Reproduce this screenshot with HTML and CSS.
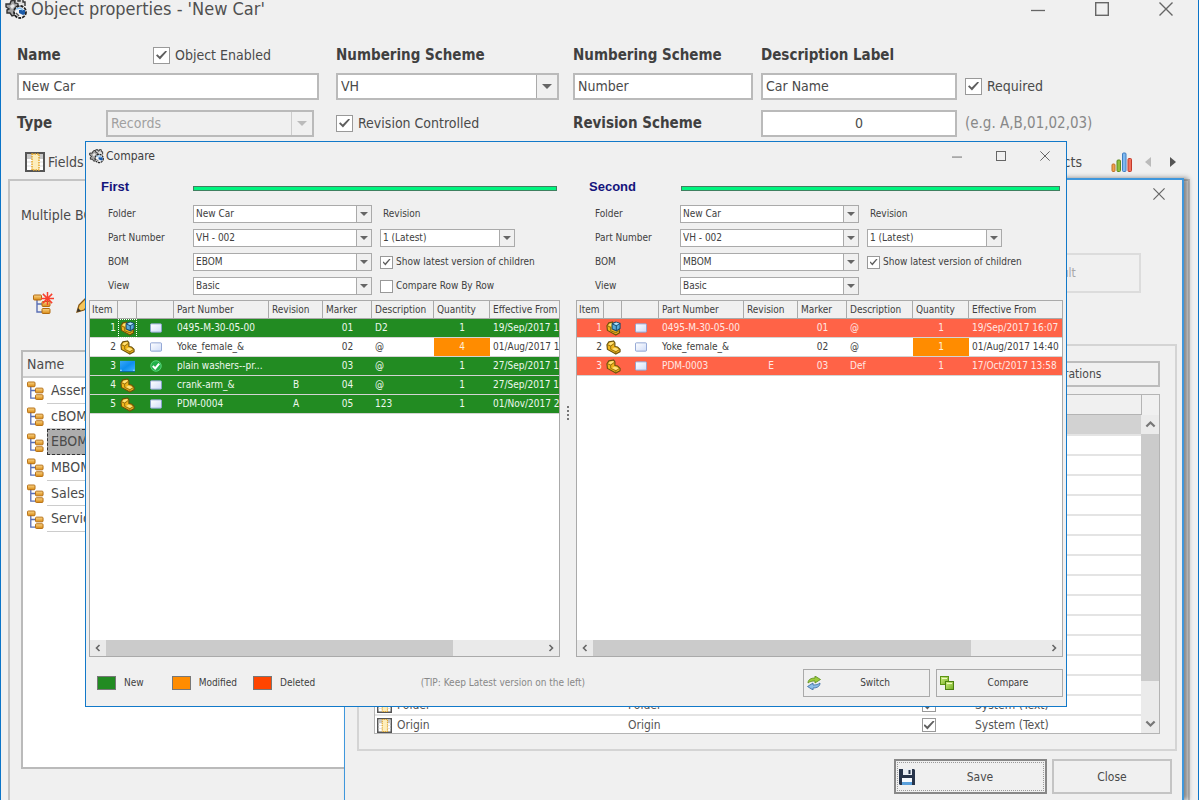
FILE: index.html
```html
<!DOCTYPE html>
<html lang="en">
<head>
<meta charset="utf-8">
<title>Object properties - 'New Car'</title>
<link rel="stylesheet" href="styles.css">
</head>
<body>
<svg class="defs" aria-hidden="true">
  <defs>
    <linearGradient id="g-gold" x1="0" y1="0" x2="0" y2="1"><stop offset="0" stop-color="#fbd68a"/><stop offset="1" stop-color="#d98a12"/></linearGradient>
    <linearGradient id="g-card" x1="0" y1="0" x2="1" y2="1"><stop offset="0" stop-color="#ffffff"/><stop offset="1" stop-color="#cfdcf8"/></linearGradient>
    <linearGradient id="g-screen" x1="0" y1="0" x2="1" y2="1"><stop offset="0" stop-color="#3aa8f8"/><stop offset=".5" stop-color="#0e8eee"/><stop offset="1" stop-color="#3db2ff"/></linearGradient>
    <linearGradient id="g-box" x1="0" y1="0" x2="1" y2="1"><stop offset="0" stop-color="#d5ee8a"/><stop offset="1" stop-color="#6fae1c"/></linearGradient>
  </defs>
  <symbol id="i-gears" viewBox="0 0 22 22">
    <path d="M6 3l3-1 1 3 3 0 0 3-2 1 1 3-2 2 0 3-3 1-2-3-3 0 0-3 2-1-3-2 0-3 4 0z" fill="#a4a4a4" stroke="#333" stroke-width="1.400"/>
    <path d="M10 4V1h3v2h2V1h3v3h2v4" fill="#ddd" stroke="#333" stroke-width="1.400"/>
    <circle cx="15" cy="14" r="6" fill="#f4f4f4" stroke="#222" stroke-width="1.800" stroke-dasharray="3 1"/>
    <path d="M14 12h6v4l-2 1-4-2z" fill="#1b5aa8"/><path d="M11 11l4-1 3 2" stroke="#8cc4f4" stroke-width="1.600" fill="none"/>
    <path d="M11 15l3 3" stroke="#555" stroke-width="1.400"/>
    <path d="M5 8l3-2 2 2-3 3z" fill="#e8e8e8"/>
  </symbol>
  <symbol id="i-fields" viewBox="0 0 20 20">
    <rect x="1" y="1" width="18" height="18" fill="#fff" stroke="#555" stroke-width="2"/>
    <path d="M2 2h16v5H2z" fill="#c9c9c9"/><path d="M2 10h16M2 14h16" stroke="#ddd"/>
    <rect x="7" y="2" width="7" height="16" fill="#fdeebc" stroke="#e3a72b" stroke-width="1.500" stroke-dasharray="1.500 1"/>
  </symbol>
  <symbol id="i-tree" viewBox="0 0 18 20">
    <path d="M4 5v13h6M4 10h6" fill="none" stroke="#5a6fb4" stroke-width="1.400"/>
    <rect x=".5" y="1" width="8" height="5" rx="1" fill="url(#g-gold)" stroke="#b36b10"/>
    <rect x="9" y="7.500" width="8" height="5" rx="1" fill="url(#g-gold)" stroke="#b36b10"/>
    <rect x="9" y="14.500" width="8" height="5" rx="1" fill="url(#g-gold)" stroke="#b36b10"/>
  </symbol>
  <symbol id="i-star" viewBox="0 0 14 14">
    <path d="M7 0v14M0 7h14M2 2l10 10M12 2L2 12" stroke="#f8402e" stroke-width="1.600"/>
  </symbol>
  <symbol id="i-pencil" viewBox="0 0 18 18">
    <path d="M1 17l2-7 9-9 5 5-9 9z" fill="#f6c558" stroke="#8c5a12" stroke-width="1.300"/><path d="M1 17l1-4 3 3z" fill="#333"/>
  </symbol>
  <symbol id="i-part" viewBox="0 0 16 16">
    <path d="M1 5l2-3 5-1 1.500 2v4l3 .5 2.500 2.500v2.500L10.500 15 1.500 10z" fill="#f0b51c" stroke="#69500c" stroke-width="1.200" stroke-linejoin="round"/>
    <path d="M1.500 5l3.500 1.500 4-3M5 6.500V10l5.500 2.500 4-2.500M10.500 12.500V15" fill="none" stroke="#86660f" stroke-width=".9"/>
    <path d="M2.500 4.500L4 2.800l3.500-.8 1 1-3.500 2.500zM6.500 9.500L9.500 8l4 1.800-3 1.800z" fill="#ffe27a"/>
  </symbol>
  <symbol id="i-asm" viewBox="0 0 16 16">
    <path d="M1 5l2-3 4-1 2 7 5-.5.500 5L10.500 15 1.500 10z" fill="#f0b51c" stroke="#69500c" stroke-width="1.200" stroke-linejoin="round"/>
    <path d="M1.500 5l3.500 2v3.500l5.500 2 4-2.500" fill="none" stroke="#86660f"/><path d="M2.500 4.500L4 2.800l3-.6L5.500 5.500z" fill="#ffe27a"/>
    <path d="M6.500 3l4-2 4.500 1.500v5.500L11 10.500 6.500 8.500z" fill="#58a9d8" stroke="#174a6c" stroke-width="1.100"/>
    <path d="M6.500 3L11 5l4-2.500M11 5v5.500" fill="none" stroke="#174a6c"/><path d="M8 3l3-1.300 3 1L11 4.300z" fill="#b5e2f8"/>
  </symbol>
  <symbol id="i-screen" viewBox="0 0 16 12">
    <rect width="16" height="11" fill="url(#g-screen)"/><path d="M0 11.500h16" stroke="#0b62b5"/><path d="M0 10h2M14 10h1.500" stroke="#bfe4ff"/>
  </symbol>
  <symbol id="i-card" viewBox="0 0 13 10">
    <rect x=".5" y=".5" width="12" height="9" rx="1" fill="url(#g-card)" stroke="#8aa0d0"/>
  </symbol>
  <symbol id="i-ok" viewBox="0 0 12 12">
    <circle cx="6" cy="6" r="5.700" fill="#22b04a"/><circle cx="6" cy="6" r="5.200" fill="none" stroke="#6fdc88" stroke-width=".7"/><path d="M2.800 6l2.400 2.500L9.200 3.700" fill="none" stroke="#fff" stroke-width="2"/>
  </symbol>
  <symbol id="i-chart" viewBox="0 0 22 20">
    <rect x="1" y="12" width="3" height="7.500" rx="1" fill="#f0a24a" stroke="#c0702a"/>
    <rect x="6" y="8" width="3.500" height="11.500" rx="1" fill="#8fbf3a" stroke="#5c8a1e"/>
    <rect x="11.500" y="1" width="3.500" height="18.500" rx="1" fill="#7fb8ee" stroke="#3f7fc4"/>
    <rect x="17" y="6.500" width="3.500" height="13" rx="1" fill="#f2705c" stroke="#c23a2a"/>
  </symbol>
  <symbol id="i-save" viewBox="0 0 16 16">
    <path d="M0 0h15l1 1v15H1l-1-1z" fill="#27344a"/><rect x="4" y="0" width="9" height="6" fill="#e9eef4"/><rect x="9.500" y="1" width="2" height="4" fill="#27344a"/>
    <rect x="3" y="9" width="10" height="7" fill="#f7fbff"/><rect x="3" y="13" width="10" height="3" fill="#5aa0dc"/>
  </symbol>
  <symbol id="i-switch" viewBox="0 0 14 14">
    <path d="M1 7C1 3.500 4 2 8 2V0l5.500 3.500L8 7V5C5 5 3 5.500 1 7z" fill="#9ccb3b" stroke="#5a8c1c" stroke-width=".8"/>
    <path d="M13 7c0 3.500-3 5-7 5v2L.5 10.500 6 7v2c3 0 5-.5 7-2z" fill="#8fbfe8" stroke="#35679f" stroke-width=".8"/>
  </symbol>
  <symbol id="i-boxes" viewBox="0 0 14 14">
    <rect x=".5" y=".5" width="8" height="8" fill="url(#g-box)" stroke="#5c9414"/>
    <rect x="5.500" y="5.500" width="8" height="8" fill="url(#g-box)" stroke="#4c7f10"/>
    <path d="M2 2.500h5M7 7.500h5" stroke="#eefabf"/>
  </symbol>
  <symbol id="i-min" viewBox="0 0 14 14"><path d="M0 8.500h14" stroke="currentColor" stroke-width="1.300"/></symbol>
  <symbol id="i-max" viewBox="0 0 14 14"><rect x=".7" y=".7" width="12.600" height="12.600" fill="none" stroke="currentColor" stroke-width="1.400"/></symbol>
  <symbol id="i-close" viewBox="0 0 14 14"><path d="M.5.5l13 13M13.500.5l-13 13" stroke="currentColor" stroke-width="1.400"/></symbol>
  <symbol id="i-left" viewBox="0 0 6 10"><path d="M6 0v10L0 5z" fill="currentColor"/></symbol>
  <symbol id="i-right" viewBox="0 0 6 10"><path d="M0 0v10l6-5z" fill="currentColor"/></symbol>
  <symbol id="i-chev" viewBox="0 0 8 8"><path d="M5.500 1L2.500 4l3 3" fill="none" stroke="currentColor" stroke-width="1.600"/></symbol>
</svg>

<main class="window object-window">
  <header class="titlebar">
    <svg class="title-icon"><use href="#i-gears"/></svg>
    <h1 class="title">Object properties - 'New Car'</h1>
    <div class="win-buttons">
      <button aria-label="Minimize"><svg><use href="#i-min"/></svg></button>
      <button aria-label="Maximize"><svg><use href="#i-max"/></svg></button>
      <button aria-label="Close window"><svg><use href="#i-close"/></svg></button>
    </div>
  </header>

  <form class="object-form">
    <div class="cell"><label class="strong name-label" for="name">Name</label><label class="check"><input type="checkbox" checked> Object Enabled</label></div>
    <div class="cell"><label class="strong" for="scheme">Numbering Scheme</label></div>
    <div class="cell"><label class="strong" for="number">Numbering Scheme</label></div>
    <div class="cell"><label class="strong" for="desc">Description Label</label></div>
    <div class="cell"></div>

    <div class="cell wide-gap"><input class="box" id="name" type="text" value="New Car"></div>
    <div class="cell mid-gap"><span class="drop"><select id="scheme"><option>VH</option></select></span></div>
    <div class="cell"><input class="box" id="number" type="text" value="Number"></div>
    <div class="cell"><input class="box" id="desc" type="text" value="Car Name"></div>
    <div class="cell"><label class="check"><input type="checkbox" checked> Required</label></div>

    <div class="cell wide-gap"><label class="strong type-label" for="type">Type</label><span class="drop disabled"><select id="type" disabled><option>Records</option></select></span></div>
    <div class="cell"><label class="check"><input type="checkbox" checked> Revision Controlled</label></div>
    <div class="cell"><label class="strong" for="rev">Revision Scheme</label></div>
    <div class="cell"><input class="box center" id="rev" type="text" value="0"></div>
    <div class="cell hint">(e.g. A,B,01,02,03)</div>
  </form>

  <nav class="tabs">
    <svg class="tab-icon"><use href="#i-fields"/></svg><span>Fields</span>
    <span class="tab-last">Products</span>
    <svg class="chart-icon"><use href="#i-chart"/></svg>
    <button class="arrow dim" aria-label="Previous tab"><svg><use href="#i-left"/></svg></button>
    <button class="arrow" aria-label="Next tab"><svg><use href="#i-right"/></svg></button>
  </nav>

  <section class="tab-page">
    <p class="page-label">Multiple BOM</p>
    <div class="tools">
      <button class="tool new" aria-label="New structure"><svg class="tree"><use href="#i-tree"/></svg><svg class="star"><use href="#i-star"/></svg></button>
      <button class="tool" aria-label="Edit"><svg class="pencil"><use href="#i-pencil"/></svg></button>
    </div>
    <div class="bom-list">
      <div class="bom-head">Name</div>
      <ul class="bom-rows">
        <li><svg><use href="#i-tree"/></svg><span>Assembly</span></li>
        <li><svg><use href="#i-tree"/></svg><span>cBOM</span></li>
        <li class="picked"><svg><use href="#i-tree"/></svg><span>EBOM</span></li>
        <li><svg><use href="#i-tree"/></svg><span>MBOM</span></li>
        <li><svg><use href="#i-tree"/></svg><span>Sales</span></li>
        <li><svg><use href="#i-tree"/></svg><span>Service</span></li>
      </ul>
    </div>
  </section>
</main>

<section class="window fields-window" aria-label="Fields">
  <header class="fields-title"><button aria-label="Close fields"><svg><use href="#i-close"/></svg></button></header>
  <div class="default-row"><button class="default-button" disabled>Default</button></div>
  <div class="group">
    <button class="config-button">Configurations</button>
    <div class="field-grid">
      <div class="field-head"></div>
      <div class="field-body">
        <table class="field-table">
          <colgroup><col class="f-icon"><col class="f-name"><col class="f-label"><col class="f-check"><col></colgroup>
          <tbody>
            <tr class="picked"><td colspan="5"></td></tr>
            <tr><td colspan="5"></td></tr><tr><td colspan="5"></td></tr><tr><td colspan="5"></td></tr><tr><td colspan="5"></td></tr>
            <tr><td colspan="5"></td></tr><tr><td colspan="5"></td></tr><tr><td colspan="5"></td></tr><tr><td colspan="5"></td></tr>
            <tr><td colspan="5"></td></tr><tr><td colspan="5"></td></tr><tr><td colspan="5"></td></tr><tr><td colspan="5"></td></tr><tr><td colspan="5"></td></tr>
            <tr><td><svg><use href="#i-fields"/></svg></td><td>Folder</td><td>Folder</td><td><input type="checkbox" checked aria-label="Folder visible"></td><td>System (Text)</td></tr>
            <tr><td><svg><use href="#i-fields"/></svg></td><td>Origin</td><td>Origin</td><td><input type="checkbox" checked aria-label="Origin visible"></td><td>System (Text)</td></tr>
          </tbody>
        </table>
        <div class="vscroll"><svg class="up"><use href="#i-chev"/></svg><div class="vthumb"></div><div class="vtrack"></div><svg class="down"><use href="#i-chev"/></svg></div>
      </div>
    </div>
  </div>
  <footer class="fields-footer">
    <button class="save"><svg><use href="#i-save"/></svg><span>Save</span></button>
    <button class="close"><span>Close</span></button>
  </footer>
</section>

<section class="window compare-window" aria-label="Compare">
  <header class="compare-title">
    <svg class="title-icon"><use href="#i-gears"/></svg>
    <h2 class="title">Compare</h2>
    <div class="win-buttons">
      <button aria-label="Minimize compare"><svg><use href="#i-min"/></svg></button>
      <button aria-label="Maximize compare"><svg><use href="#i-max"/></svg></button>
      <button aria-label="Close compare"><svg><use href="#i-close"/></svg></button>
    </div>
  </header>

  <div class="panes">
    <section class="pane first">
      <div class="pane-head"><h3>First</h3><div class="bar"></div></div>
      <div class="pane-form">
        <label for="folder1">Folder</label><span class="drop"><select id="folder1"><option>New Car</option></select></span><label class="rev" for="rev1">Revision</label>
        <label for="part1">Part Number</label><span class="drop"><select id="part1"><option>VH - 002</option></select></span><span class="drop"><select id="rev1"><option>1 (Latest)</option></select></span>
        <label for="bom1">BOM</label><span class="drop"><select id="bom1"><option>EBOM</option></select></span><label class="check"><input type="checkbox" checked> Show latest version of children</label>
        <label for="view1">View</label><span class="drop"><select id="view1"><option>Basic</option></select></span><label class="check"><input type="checkbox"> Compare Row By Row</label>
      </div>
      <div class="grid-box">
        <div class="grid-view">
          <table class="parts">
            <colgroup><col class="w-item"><col class="w-kind"><col class="w-state"><col class="w-part"><col class="w-rev"><col class="w-mark"><col class="w-desc"><col class="w-qty"><col></colgroup>
            <thead><tr><th>Item</th><th></th><th></th><th>Part Number</th><th>Revision</th><th>Marker</th><th>Description</th><th>Quantity</th><th>Effective From</th></tr></thead>
            <tbody>
              <tr class="new"><td>1</td><td class="focus"><svg class="part"><use href="#i-asm"/></svg></td><td><svg class="card"><use href="#i-card"/></svg></td><td>0495-M-30-05-00</td><td></td><td>01</td><td>D2</td><td>1</td><td>19/Sep/2017 16:07</td></tr>
              <tr><td>2</td><td><svg class="part"><use href="#i-part"/></svg></td><td><svg class="card"><use href="#i-card"/></svg></td><td>Yoke_female_&amp;</td><td></td><td>02</td><td>@</td><td class="modified">4</td><td>01/Aug/2017 14:40</td></tr>
              <tr class="new"><td>3</td><td><svg class="part"><use href="#i-screen"/></svg></td><td><svg class="ok"><use href="#i-ok"/></svg></td><td>plain washers--pr...</td><td></td><td>03</td><td>@</td><td>1</td><td>27/Sep/2017 11:20</td></tr>
              <tr class="new"><td>4</td><td><svg class="part"><use href="#i-part"/></svg></td><td><svg class="card"><use href="#i-card"/></svg></td><td>crank-arm_&amp;</td><td>B</td><td>04</td><td>@</td><td>1</td><td>27/Sep/2017 11:20</td></tr>
              <tr class="new"><td>5</td><td><svg class="part"><use href="#i-part"/></svg></td><td><svg class="card"><use href="#i-card"/></svg></td><td>PDM-0004</td><td>A</td><td>05</td><td>123</td><td>1</td><td>01/Nov/2017 20:10</td></tr>
            </tbody>
          </table>
        </div>
        <div class="hscroll"><svg><use href="#i-chev"/></svg><div class="hthumb"></div><div class="htrack"></div><svg class="flip"><use href="#i-chev"/></svg></div>
      </div>
    </section>

    <div class="splitter"><i></i><i></i><i></i><i></i></div>

    <section class="pane second">
      <div class="pane-head"><h3>Second</h3><div class="bar"></div></div>
      <div class="pane-form">
        <label for="folder2">Folder</label><span class="drop"><select id="folder2"><option>New Car</option></select></span><label class="rev" for="rev2">Revision</label>
        <label for="part2">Part Number</label><span class="drop"><select id="part2"><option>VH - 002</option></select></span><span class="drop"><select id="rev2"><option>1 (Latest)</option></select></span>
        <label for="bom2">BOM</label><span class="drop"><select id="bom2"><option>MBOM</option></select></span><label class="check"><input type="checkbox" checked> Show latest version of children</label>
        <label for="view2">View</label><span class="drop"><select id="view2"><option>Basic</option></select></span>
      </div>
      <div class="grid-box">
        <div class="grid-view">
          <table class="parts">
            <colgroup><col class="w-item"><col class="w-kind"><col class="w-state"><col class="w-part"><col class="w-rev"><col class="w-mark"><col class="w-desc"><col class="w-qty"><col></colgroup>
            <thead><tr><th>Item</th><th></th><th></th><th>Part Number</th><th>Revision</th><th>Marker</th><th>Description</th><th>Quantity</th><th>Effective From</th></tr></thead>
            <tbody>
              <tr class="deleted"><td>1</td><td><svg class="part"><use href="#i-asm"/></svg></td><td><svg class="card"><use href="#i-card"/></svg></td><td>0495-M-30-05-00</td><td></td><td>01</td><td>@</td><td>1</td><td>19/Sep/2017 16:07</td></tr>
              <tr><td>2</td><td><svg class="part"><use href="#i-part"/></svg></td><td><svg class="card"><use href="#i-card"/></svg></td><td>Yoke_female_&amp;</td><td></td><td>02</td><td>@</td><td class="modified">1</td><td>01/Aug/2017 14:40</td></tr>
              <tr class="deleted"><td>3</td><td><svg class="part"><use href="#i-part"/></svg></td><td><svg class="card"><use href="#i-card"/></svg></td><td>PDM-0003</td><td>E</td><td>03</td><td>Def</td><td>1</td><td>17/Oct/2017 13:58</td></tr>
            </tbody>
          </table>
        </div>
        <div class="hscroll"><svg><use href="#i-chev"/></svg><div class="hthumb"></div><div class="htrack"></div><svg class="flip"><use href="#i-chev"/></svg></div>
      </div>
    </section>
  </div>

  <footer class="compare-footer">
    <ul class="legend">
      <li><i class="swatch s-new"></i>New</li>
      <li><i class="swatch s-mod"></i>Modified</li>
      <li><i class="swatch s-del"></i>Deleted</li>
    </ul>
    <p class="tip">(TIP: Keep Latest version on the left)</p>
    <button class="action"><svg><use href="#i-switch"/></svg><span>Switch</span></button>
    <button class="action"><svg><use href="#i-boxes"/></svg><span>Compare</span></button>
  </footer>
</section>
</body>
</html>
```

FILE: styles.css
```css
* { box-sizing: border-box; }
body {
  position: relative;
  height: 100vh;
  margin: 0;
  overflow: hidden;
  background: #f0f0f0;
  color: #4a4a4a;
  font: 14px/20px "DejaVu Sans Condensed", "DejaVu Sans", sans-serif;
}
h1, h2, h3, p, ul { margin: 0; padding: 0; font-weight: normal; list-style: none; }
button, input, select { margin: 0; padding: 0; font: inherit; color: inherit; }
button { border: 0; background: none; }
svg { display: block; flex: none; }
.defs { position: absolute; width: 0; height: 0; }
.window { background: #f0f0f0; }

/* Main window */
.object-window {
  display: flex;
  flex-direction: column;
  height: 100vh;
  border: solid #0a74c8;
  border-width: 0 1px;
}
.titlebar { display: flex; align-items: center; height: 18px; padding: 0 25px 0 4px; }
.titlebar .title-icon { width: 22px; height: 22px; }
.titlebar .title { margin-left: 4px; font-size: 18px; color: #505050; }
.win-buttons { display: flex; margin-left: auto; }
.titlebar .win-buttons { gap: 50px; color: #666; }
.titlebar .win-buttons svg { width: 14px; height: 14px; }

.object-form {
  display: grid;
  grid-template-columns: 319fr 237fr 188fr 204fr 233fr;
  grid-template-rows: 26px 36px 38px;
  margin: 24px 0 0 16px;
}
.cell { display: flex; align-items: center; min-width: 0; padding-right: 8px; }
.cell.wide-gap { padding-right: 17px; }
.cell.mid-gap { padding-right: 14px; }
.strong { font-size: 15px; font-weight: bold; color: #404040; }
.name-label { width: 136px; }
.type-label { width: 89px; flex: none; }
.hint { font-size: 15px; color: #888; }
.box {
  width: 100%;
  height: 27px;
  padding: 0 3px;
  border: 2px solid #bababa;
  background: #fff;
}
.center { text-align: center; }
.check { display: flex; align-items: center; gap: 5px; white-space: nowrap; }
input[type="checkbox"] {
  display: grid;
  place-items: center;
  flex: none;
  width: 17px;
  height: 17px;
  appearance: none;
  border: 1px solid #999;
  background: #fff;
}
input[type="checkbox"]:checked::before {
  content: "";
  width: 11px;
  height: 9px;
  background: #606060;
  clip-path: polygon(0 55%, 12% 42%, 34% 68%, 88% 0, 100% 12%, 36% 100%);
}
.drop { display: flex; position: relative; width: 100%; }
.drop select {
  width: 100%;
  height: 27px;
  padding: 0 24px 0 3px;
  appearance: none;
  border: 2px solid #bababa;
  border-radius: 0;
  background: #fff;
}
.drop::before {
  content: "";
  position: absolute;
  top: 2px;
  right: 2px;
  bottom: 2px;
  width: 20px;
  border-left: 1px solid #aaa;
  background: #f0f0f0;
}
.drop::after {
  content: "";
  position: absolute;
  top: 11px;
  right: 7px;
  border: solid transparent;
  border-width: 5px 5px 0;
  border-top-color: #666;
}
.drop.disabled { width: 208px; }
.drop.disabled select { background: #f0f0f0; color: #a0a0a0; opacity: 1; }
.drop.disabled::before { border-left-color: #ccc; }
.drop.disabled::after { border-top-color: #bbb; }

.tabs { display: flex; align-items: center; height: 40px; padding: 0 22px 0 24px; }
.tab-icon { width: 20px; height: 20px; margin-right: 3px; }
.tab-last { margin-left: auto; }
.chart-icon { width: 22px; height: 20px; margin: 0 12px 0 29px; }
.arrow { width: 6px; margin-right: 19px; color: #555; }
.arrow:last-child { margin-right: 0; }
.arrow.dim { color: #bbb; }
.arrow svg { width: 6px; height: 10px; }

.tab-page {
  display: flex;
  flex-direction: column;
  flex: 1;
  min-height: 0;
  margin: -3px 8px 0 7px;
  padding: 24px 12px 31px 11px;
  border: solid #c4c4c4;
  border-width: 2px 2px 0;
}
.tools { display: flex; gap: 25px; margin-top: 67px; height: 24px; }
.tool { padding-left: 12px; }
.tool + .tool { padding-left: 0; }
.tool.new { position: relative; }
.tree { width: 18px; height: 20px; }
.star { position: absolute; top: 0; right: -3px; width: 13px; height: 13px; }
.pencil { width: 18px; height: 18px; }
.bom-list { display: flex; flex-direction: column; flex: 1; margin-top: 34px; border: 2px solid #bababa; background: #fff; }
.bom-head { height: 26px; padding: 2px 4px; border-bottom: 2px solid #ccc; background: #f0f0f0; }
.bom-rows { display: flex; flex-direction: column; height: 154px; }
.bom-rows li { display: flex; flex: 1; align-items: center; gap: 3px; padding-left: 4px; }
.bom-rows svg { width: 17px; height: 19px; }
.bom-rows span { flex: 1; height: 100%; padding: 2px 4px; border-bottom: 1px solid #ccc; }
.bom-rows .picked span { padding: 1px 3px; border: 1px dashed #333; background: #adadad; }

/* Fields window */
.fields-window {
  position: absolute;
  top: 178px;
  right: 15px;
  bottom: 0;
  left: 344px;
  display: flex;
  flex-direction: column;
  border: solid #3f97dc;
  border-width: 2px 2px 0 1px;
  box-shadow: 4px 0 5px rgba(0, 0, 0, 0.45);
  font-size: 12px;
}
.fields-title { display: flex; justify-content: flex-end; padding: 8px 17px 0 0; color: #666; }
.fields-title svg { width: 12px; height: 12px; }
.default-row { display: flex; justify-content: flex-end; padding: 53px 41px 0 0; }
.default-button { width: 170px; height: 40px; border: 2px solid #dcdcdc; color: #a8a8a8; }
.group {
  display: flex;
  flex-direction: column;
  align-items: flex-end;
  gap: 7px;
  flex: 1;
  min-height: 0;
  margin: 51px 5px 8px 12px;
  padding: 15px;
  border: 2px solid #d4d4d4;
}
.config-button { width: 204px; height: 26px; padding-left: 8px; border: 2px solid #bcbcbc; }
.field-grid { display: flex; flex-direction: column; flex: 1; width: 100%; min-height: 0; border: 1px solid #b4b4b4; }
.field-head { height: 20px; border-right: 1px solid #b4b4b4; border-bottom: 1px solid #b4b4b4; margin-right: 17px; }
.field-body { display: flex; flex: 1; min-height: 0; overflow: hidden; background: #fff; }
.field-table { flex: 1; border-collapse: collapse; table-layout: fixed; color: #555; }
.field-table tr { height: 20px; }
.field-table td { height: 20px; padding: 0 2px; border-bottom: 2px solid #e4e4e4; line-height: 16px; }
.field-table .picked td { background: #d2d2d2; }
.field-table svg { width: 15px; height: 15px; }
.field-table input { width: 14px; height: 14px; }
.f-icon { width: 20px; }
.f-name { width: 231px; }
.f-label { width: 294px; }
.f-check { width: 53px; }
.vscroll { display: flex; flex-direction: column; align-items: center; width: 18px; background: #ebebeb; }
.vscroll svg { width: 11px; height: 11px; margin: 4px 0; transform: rotate(90deg); color: #777; }
.vscroll .down { transform: rotate(-90deg); }
.vthumb { flex: 247; width: 100%; background: #cbcbcb; }
.vtrack { flex: 33; }
.fields-footer { display: flex; justify-content: flex-end; gap: 5px; padding: 0 10px 6px 0; }
.save, .close { display: flex; align-items: center; height: 35px; border: 2px solid #c4c4c4; }
.save { width: 153px; padding-left: 3px; border-color: #888; outline: 1px dotted #999; outline-offset: -4px; }
.save svg { width: 16px; height: 16px; }
.save span, .close span { flex: 1; text-align: center; }
.close { width: 120px; }

/* Compare window */
.compare-window {
  position: absolute;
  top: 141px;
  left: 85px;
  right: 132px;
  bottom: 93px;
  display: flex;
  flex-direction: column;
  padding: 0 3px;
  border: 1px solid #1279c9;
  color: #404040;
  font-size: 10px;
  line-height: 14px;
}
.compare-title { display: flex; align-items: center; height: 28px; padding-right: 13px; }
.compare-title .title-icon { width: 15px; height: 15px; }
.compare-title .title { margin-left: 2px; font-size: 12px; }
.compare-title .win-buttons { gap: 34px; color: #666; }
.compare-title .win-buttons svg { width: 10px; height: 10px; }
.panes { display: flex; flex: 1; min-height: 0; }
.pane { display: flex; flex-direction: column; min-width: 0; }
.pane.first { flex: 471; }
.pane.second { flex: 487; }
.pane-head { display: flex; align-items: center; height: 32px; padding: 2px 3px 0 12px; }
.pane-head h3 { width: 92px; font: bold 13px/16px "Liberation Sans", Arial, sans-serif; color: #14147c; }
.second .pane-head { padding-left: 13px; }
.bar { flex: 1; height: 5px; margin-top: 2px; border: 1px solid #3f8060; background: #00f57f; }
.pane-form { display: grid; grid-template-columns: 85px 179px 1fr; grid-auto-rows: 24px; align-items: center; height: 98px; padding-left: 19px; }
.pane-form .drop select { height: 18px; padding: 0 16px 0 2px; border-width: 1px; border-color: #aaa; }
.pane-form .drop::before { top: 1px; right: 1px; bottom: 1px; width: 14px; }
.pane-form .drop::after { top: 7px; right: 4px; border-width: 4px 4px 0; }
.pane-form .drop:nth-child(6) { width: 135px; margin-left: 8px; }
.pane-form .rev { margin-left: 11px; }
.pane-form .check { gap: 3px; margin-left: 8px; }
.pane-form input[type="checkbox"] { width: 13px; height: 13px; }
.pane-form input:checked::before { width: 8px; height: 7px; }

.grid-box { display: flex; flex-direction: column; flex: 1; border: 1px solid #aaa; background: #fff; }
.grid-view { flex: 1; overflow: hidden; }
.parts { width: 100%; border-collapse: separate; border-spacing: 0; table-layout: fixed; }
.parts th, .parts td { height: 19px; padding: 0 0 0 3px; overflow: hidden; text-align: left; font-weight: normal; white-space: nowrap; text-overflow: clip; }
.parts th { height: 18px; border-right: 1px solid #aaa; border-bottom: 1px solid #aaa; background: #f0f0f0; }
.parts th:first-child { padding-left: 2px; }
.parts th:last-child { border-right: 0; }
.parts td { border-bottom: 1px solid #d4d4d4; }
.parts td:first-child { padding-right: 2px; text-align: right; }
.parts td:nth-child(2) { padding: 0 2px; }
.parts td:nth-child(3), .parts td:nth-child(5), .parts td:nth-child(6), .parts td:nth-child(8) { padding: 0 2px; text-align: center; }
.parts .new td { background: #228b22; color: #eef8ee; }
.parts .deleted td { background: #ff6347; color: #ffe8e4; }
.parts td.modified { background: #ff8c00; color: #fff0d8; }
.parts .focus { outline: 1px dotted #fff; outline-offset: -1px; }
.part { width: 15px; height: 15px; }
.card { width: 12px; height: 10px; margin: auto; }
.ok { width: 12px; height: 12px; margin: auto; }
.w-item { width: 28px; }
.second .w-item { width: 27px; }
.w-kind { width: 19px; }
.second .w-kind { width: 18px; }
.w-state { width: 37px; }
.w-part { width: 95px; }
.second .w-part { width: 85px; }
.w-rev { width: 54px; }
.w-mark { width: 49px; }
.w-desc { width: 62px; }
.second .w-desc { width: 66px; }
.w-qty { width: 56px; }
.hscroll { display: flex; align-items: center; height: 16px; background: #eaeaea; color: #666; }
.hscroll svg { width: 8px; height: 8px; margin: 0 4px; }
.flip { transform: scaleX(-1); }
.hthumb { flex: 348; height: 100%; background: #cbcbcb; }
.htrack { flex: 90; }
.second .hthumb { flex: 379; }
.second .htrack { flex: 75; }
.splitter { display: flex; flex-direction: column; align-items: center; gap: 2px; width: 16px; padding-top: 236px; }
.splitter i { width: 2px; height: 2px; background: #777; }

.compare-footer { display: flex; align-items: center; gap: 6px; height: 49px; padding: 3px 0 0 8px; }
.legend { display: flex; flex: 320; }
.legend li { display: flex; align-items: center; gap: 8px; margin-right: 28px; }
.legend li + li { margin-right: 16px; }
.swatch { width: 19px; height: 14px; border: 1px solid #777; }
.s-new { background: #228b22; }
.s-mod { background: #ff8c00; }
.s-del { background: #ff4500; }
.tip { flex: 379; color: #888; }
.action { display: flex; align-items: center; width: 127px; height: 28px; padding: 0 0 0 3px; border: 1px solid #aaa; }
.action svg { width: 14px; height: 14px; }
.action span { flex: 1; text-align: center; }
```
